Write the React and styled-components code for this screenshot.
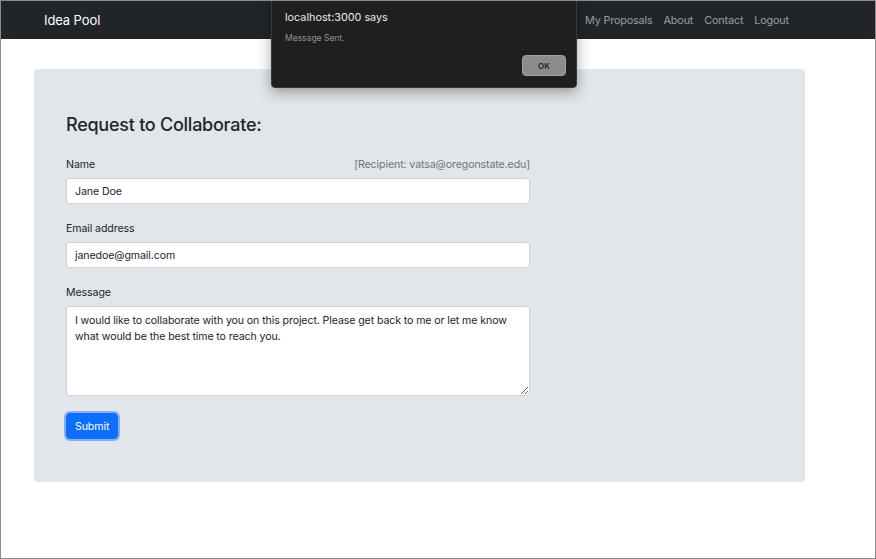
import React from "react";
import styled, { createGlobalStyle } from "styled-components";

const GlobalStyle = createGlobalStyle`
  html, body {
    margin: 0;
    padding: 0;
    background: #ffffff;
  }
  body {
    font-family: "Inter", "Liberation Sans", sans-serif;
    color: #212529;
  }
`;

const Frame = styled.div`
  position: relative;
  width: 876px;
  height: 559px;
  box-sizing: border-box;
  border: 1px solid #8c8c8c;
  background: #fff;
  overflow: hidden;
`;

const Navbar = styled.nav`
  height: 38px;
  background: #212529;
  display: flex;
  align-items: center;
  justify-content: space-between;
  padding: 0 86px 0 43px;
`;

const Brand = styled.span`
  color: #fff;
  font-size: 13px;
  letter-spacing: -0.1px;
`;

const NavLinks = styled.div`
  display: flex;
  gap: 11px;
`;

const NavLink = styled.a`
  color: rgba(255, 255, 255, 0.55);
  font-size: 10.8px;
  letter-spacing: -0.15px;
  text-decoration: none;
`;

const Main = styled.main`
  padding: 30px 0 0 33px;
`;

const Card = styled.section`
  width: 771px;
  box-sizing: border-box;
  background: #e2e6ea;
  border-radius: 4px;
  padding: 44px 32px 43px;
`;

const Title = styled.h2`
  margin: 0 0 20px;
  font-size: 18px;
  font-weight: 500;
  line-height: 24px;
  letter-spacing: -0.25px;
`;

const Form = styled.form`
  width: 464px;
  display: flex;
  flex-direction: column;
  gap: 17px;
`;

const Group = styled.div`
  display: flex;
  flex-direction: column;
  gap: 5px;
`;

const LabelRow = styled.div`
  display: flex;
  justify-content: space-between;
  align-items: center;
  font-size: 10.6px;
  line-height: 16px;
  letter-spacing: -0.1px;
`;

const Label = styled.label`
  color: #212529;
`;

const Recipient = styled.span`
  color: #6c757d;
`;

const Field = styled.input`
  box-sizing: border-box;
  height: 26px;
  width: 100%;
  padding: 0 8px;
  border: 1px solid #ced4da;
  border-radius: 3px;
  background: #fff;
  font-family: inherit;
  font-size: 10.6px;
  letter-spacing: -0.1px;
  color: #212529;
  outline: none;
`;

const Area = styled.textarea`
  box-sizing: border-box;
  height: 90px;
  width: 100%;
  padding: 6px 8px;
  border: 1px solid #ced4da;
  border-radius: 3px;
  background: #fff;
  font-family: inherit;
  font-size: 10.6px;
  letter-spacing: -0.1px;
  line-height: 16px;
  color: #212529;
  outline: none;
  resize: vertical;
`;

const SubmitButton = styled.button`
  align-self: flex-start;
  height: 26px;
  padding: 0 8px;
  border: 1px solid #0d6efd;
  border-radius: 4px;
  background: #0d6efd;
  color: #fff;
  font-family: inherit;
  font-size: 10.6px;
  letter-spacing: -0.1px;
  box-shadow: 0 0 0 2px rgba(13, 110, 253, 0.45);
  cursor: pointer;
`;

const Alert = styled.div`
  position: absolute;
  left: 270px;
  top: -1px;
  width: 306px;
  height: 88px;
  box-sizing: border-box;
  background: #1f1f1f;
  border: 1px solid #3a3a3a;
  border-radius: 0 0 4px 4px;
  box-shadow: 0 4px 14px rgba(0, 0, 0, 0.35);
  padding: 10px 10px 0 13px;
  display: flex;
  flex-direction: column;
`;

const AlertTitle = styled.div`
  color: #e9e9e9;
  font-size: 10.8px;
  line-height: 14px;
`;

const AlertText = styled.div`
  margin-top: 7px;
  color: #8f8f8f;
  font-size: 8.5px;
  line-height: 12px;
`;

const AlertButton = styled.button`
  align-self: flex-end;
  margin-top: 11px;
  width: 44px;
  height: 21px;
  border: 1px solid #a2a2a2;
  border-radius: 4px;
  background: #8c8c8c;
  color: #1f1f1f;
  font-family: inherit;
  font-size: 8px;
  font-weight: 600;
  padding: 0;
`;

export default function App() {
  return (
    <>
      <GlobalStyle />
      <Frame>
        <Navbar>
          <Brand>Idea Pool</Brand>
          <NavLinks>
            <NavLink href="#">Home</NavLink>
            <NavLink href="#">My Proposals</NavLink>
            <NavLink href="#">About</NavLink>
            <NavLink href="#">Contact</NavLink>
            <NavLink href="#">Logout</NavLink>
          </NavLinks>
        </Navbar>
        <Main>
          <Card>
            <Title>Request to Collaborate:</Title>
            <Form onSubmit={(e) => e.preventDefault()}>
              <Group>
                <LabelRow>
                  <Label htmlFor="name">Name</Label>
                  <Recipient>[Recipient: vatsa@oregonstate.edu]</Recipient>
                </LabelRow>
                <Field id="name" type="text" defaultValue="Jane Doe" />
              </Group>
              <Group>
                <LabelRow>
                  <Label htmlFor="email">Email address</Label>
                </LabelRow>
                <Field id="email" type="email" defaultValue="janedoe@gmail.com" />
              </Group>
              <Group>
                <LabelRow>
                  <Label htmlFor="message">Message</Label>
                </LabelRow>
                <Area
                  id="message"
                  defaultValue="I would like to collaborate with you on this project. Please get back to me or let me know what would be the best time to reach you."
                />
              </Group>
              <SubmitButton type="submit">Submit</SubmitButton>
            </Form>
          </Card>
        </Main>
        <Alert role="alertdialog">
          <AlertTitle>localhost:3000 says</AlertTitle>
          <AlertText>Message Sent.</AlertText>
          <AlertButton type="button">OK</AlertButton>
        </Alert>
      </Frame>
    </>
  );
}
